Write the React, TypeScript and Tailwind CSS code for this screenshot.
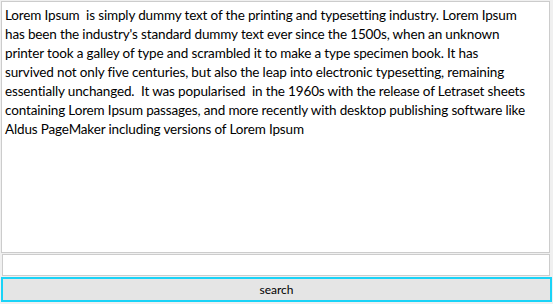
import { useState } from "react";

const text = [
  "Lorem Ipsum  is simply dummy text of the printing and typesetting industry. Lorem Ipsum",
  "has been the industry's standard dummy text ever since the 1500s, when an unknown",
  "printer took a galley of type and scrambled it to make a type specimen book. It has",
  "survived not only five centuries, but also the leap into electronic typesetting, remaining",
  "essentially unchanged.  It was popularised  in the 1960s with the release of Letraset sheets",
  "containing Lorem Ipsum passages, and more recently with desktop publishing software like",
  "Aldus PageMaker including versions of Lorem Ipsum",
].join("\n");

export default function App() {
  const [query, setQuery] = useState("");

  return (
    <div className="h-[304px] w-[553px] bg-[#f0f0f0] flex flex-col pt-px font-['Lato',sans-serif]">
      <textarea
        readOnly
        wrap="off"
        value={text}
        className="ml-px w-[549px] h-[252px] resize-none overflow-hidden border border-[#cccccc] bg-white px-[3px] py-[4px] text-[13.5px] tracking-[-0.15px] leading-[19px] text-black outline-none"
      />
      <input
        value={query}
        onChange={(e) => setQuery(e.target.value)}
        className="mt-px ml-[2px] w-[548px] h-[22px] border border-[#cccccc] bg-white px-1 text-[13px] outline-none"
      />
      <button className="mt-px ml-px w-[551px] h-[25px] border-2 border-[#1ad3f7] bg-[#e5e5e5] text-[12px] text-black">
        search
      </button>
    </div>
  );
}
